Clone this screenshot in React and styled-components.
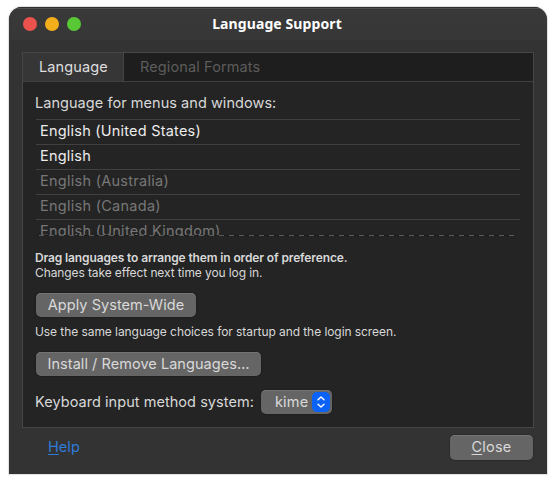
import React from 'react';
import styled, { createGlobalStyle } from 'styled-components';

const GlobalStyle = createGlobalStyle`
  * { box-sizing: border-box; }
  body {
    margin: 0;
    background: #fff;
    font-family: Inter, "Liberation Sans", sans-serif;
    font-size: 14.5px;
    letter-spacing: 0.05px;
    color: #d8d8d8;
  }
`;

const Desktop = styled.div`
  width: 556px;
  height: 483px;
  padding: 7px 9px 9px;
  overflow: hidden;
`;

const Window = styled.main`
  display: flex;
  flex-direction: column;
  width: 538px;
  height: 467px;
  background: #333;
  border-radius: 13px 13px 0 0;
  box-shadow: 0 0 1px 1px rgba(0, 0, 0, 0.13);
  overflow: hidden;
`;

const TitleBar = styled.header`
  display: grid;
  grid-template-columns: 1fr auto 1fr;
  align-items: center;
  height: 33px;
  padding: 0 14px 0;
  background: linear-gradient(#393939, #373737);
  box-shadow: inset 0 1px #303030, inset 0 2px #505050;
`;

const Controls = styled.div`
  display: flex;
  gap: 8px;
`;

const Dot = styled.span`
  width: 14px;
  height: 14px;
  border-radius: 50%;
  background: ${(p) => p.$color};
`;

const Title = styled.h1`
  margin: 0 2px 0 0;
  font: bold 14px/20px "Noto Sans", sans-serif;
  letter-spacing: 0.1px;
  color: #fff;
`;

const Notebook = styled.section`
  width: 512px;
  height: 376px;
  margin: 12px 0 0 13px;
  border: 1px solid #464646;
  background: #242424;
`;

const Tabs = styled.nav`
  display: flex;
  height: 29px;
  background: #1e1e1e;
  border-bottom: 1px solid #404040;
`;

const Tab = styled.span`
  width: ${(p) => (p.$active ? '101px' : '152px')};
  height: 28px;
  padding-left: 16px;
  line-height: 27px;
  letter-spacing: 0.12px;
  color: ${(p) => (p.$active ? '#dedede' : '#5c5c5c')};
  background: ${(p) => (p.$active ? '#363636' : 'transparent')};
  border-right: 1px solid ${(p) => (p.$active ? '#464646' : 'transparent')};
`;

const Panel = styled.div`
  display: flex;
  flex-direction: column;
  align-items: flex-start;
  padding: 11px 13px 0 12px;
`;

const Label = styled.label`
  line-height: 20px;
  white-space: nowrap;
`;

const ListFrame = styled.div`
  position: relative;
  width: 484px;
  height: 117px;
  margin: 6px 0 0 1px;
  overflow: hidden;
`;

const List = styled.ul`
  margin: 0;
  padding: 0;
  list-style: none;
`;

const Item = styled.li`
  height: 25px;
  padding-left: 4px;
  border-top: 1px solid #404040;
  line-height: 21px;
  letter-spacing: ${(p) => (p.$preferred ? '0.22px' : '0.27px')};
  color: ${(p) => (p.$preferred ? '#ececec' : '#777')};
`;

const Undershoot = styled.div`
  position: absolute;
  left: 0;
  bottom: 0;
  width: 478px;
  height: 1px;
  background: repeating-linear-gradient(90deg, #1d1d1d 0 3px, #5a5a5a 3px 8px, #1d1d1d 8px 10px);
`;

const Note = styled.p`
  margin: ${(p) => p.$margin || '0'};
  font-size: 12px;
  line-height: 15px;
  letter-spacing: ${(p) => p.$tracking || '-0.1px'};
  white-space: nowrap;
  color: #d8d8d8;
`;

const Strong = styled.strong`
  font-weight: 600;
`;

const Button = styled.button`
  display: flex;
  align-items: center;
  justify-content: ${(p) => p.$justify || 'center'};
  width: ${(p) => p.$width}px;
  height: ${(p) => p.$height || 24}px;
  margin: ${(p) => p.$margin || '0'};
  padding: ${(p) => p.$padding || '0 0 2px'};
  border: 0;
  border-radius: 5px;
  background: #656565;
  box-shadow: inset 0 1px #747474, 0 0 1px 1px rgba(0, 0, 0, 0.15);
  font: inherit;
  letter-spacing: ${(p) => p.$tracking || 'inherit'};
  white-space: nowrap;
  color: #d9d9d9;
`;

const InputMethod = styled.div`
  display: flex;
  align-items: center;
  gap: 7px;
  margin-top: 14px;
`;

const Engine = styled.span`
  padding-bottom: 1px;
`;

const Stepper = styled.span`
  display: grid;
  place-items: center;
  width: 18px;
  height: 20px;
  border-radius: 5px;
  background: #0a63f6;
`;

const Footer = styled.footer`
  display: flex;
  justify-content: space-between;
  align-items: center;
  height: 39px;
  padding: 0 14px 0 39px;
`;

const Help = styled.a`
  padding-bottom: 2px;
  color: #2f7bdb;
`;

const Mnemonic = styled.span`
  text-decoration: underline;
  text-decoration-thickness: 1px;
  text-underline-offset: 2px;
`;

const languages = [
  ['English (United States)', true],
  ['English', true],
  ['English (Australia)', false],
  ['English (Canada)', false],
  ['English (United Kingdom)', false],
];

export default function App() {
  return (
    <>
      <GlobalStyle />
      <Desktop>
        <Window>
          <TitleBar>
            <Controls>
              <Dot $color="#eb524b" />
              <Dot $color="#f3ae1b" />
              <Dot $color="#59c837" />
            </Controls>
            <Title>Language Support</Title>
          </TitleBar>
          <Notebook>
            <Tabs>
              <Tab $active>Language</Tab>
              <Tab>Regional Formats</Tab>
            </Tabs>
            <Panel>
              <Label>Language for menus and windows:</Label>
              <ListFrame>
                <List>
                  {languages.map(([name, preferred]) => (
                    <Item key={name} $preferred={preferred}>{name}</Item>
                  ))}
                </List>
                <Undershoot />
              </ListFrame>
              <Note $margin="14px 0 0" $tracking="-0.13px"><Strong>Drag languages to arrange them in order of preference.</Strong></Note>
              <Note>Changes take effect next time you log in.</Note>
              <Button $width={160} $margin="13px 0 0 1px">Apply System-Wide</Button>
              <Note $margin="7px 0 0" $tracking="-0.07px">Use the same language choices for startup and the login screen.</Note>
              <Button $width={225} $margin="13px 0 0 1px">Install / Remove Languages…</Button>
              <InputMethod>
                <Label>Keyboard input method system:</Label>
                <Button $width={71} $justify="space-between" $padding="0 2px 0 14px" $tracking="0.2px">
                  <Engine>kime</Engine>
                  <Stepper>
                    <svg width="10" height="14" viewBox="0 0 10 14" fill="none" stroke="#fff" strokeWidth="1.4" strokeLinecap="round" strokeLinejoin="round">
                      <path d="M2 4.8 5 2l3 2.8M2 9.2 5 12l3-2.8" />
                    </svg>
                  </Stepper>
                </Button>
              </InputMethod>
            </Panel>
          </Notebook>
          <Footer>
            <Help><Mnemonic>H</Mnemonic>elp</Help>
            <Button $width={83} $height={25} $tracking="0.2px"><span><Mnemonic>C</Mnemonic>lose</span></Button>
          </Footer>
        </Window>
      </Desktop>
    </>
  );
}
